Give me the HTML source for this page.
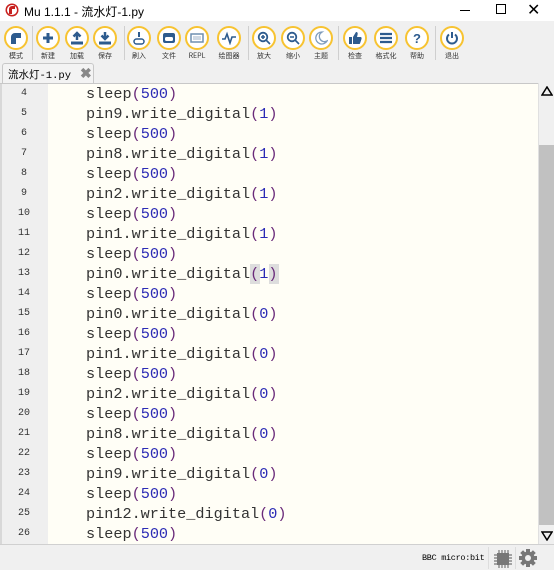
<!DOCTYPE html>
<html><head><meta charset="utf-8"><style>
*{margin:0;padding:0;box-sizing:border-box}
body{width:554px;height:570px;overflow:hidden;background:#f0f0f0;font-family:"Liberation Sans","Noto Sans CJK SC",sans-serif;position:relative}
.abs{position:absolute}
.title{left:0;top:0;width:554px;height:21px;background:#fff}
.btn{position:absolute;top:26px;width:24px;height:24px;border-radius:50%;border:2px solid #f7c331;background:#fff;display:flex;align-items:center;justify-content:center}
.lbl{position:absolute;top:51px;width:40px;text-align:center;font-size:7px;color:#333;font-family:"Noto Sans CJK SC",sans-serif}
.sep{position:absolute;top:26px;width:1px;height:34px;background:#cfcfcf}
.code{position:absolute;left:0;top:83px;width:538px;height:461px;background:#fffef6;overflow:hidden;border-top:1px solid #c8c8c8}
.gut{position:absolute;left:0;top:0;width:48px;height:100%;background:#efefef;border-left:2px solid #d8d8d8}
.ln{position:absolute;left:0;width:48px;text-align:center;font-family:"Liberation Mono",monospace;font-size:10px;color:#333;line-height:20px}
.cl{position:absolute;left:86px;font-family:"Liberation Mono",monospace;font-size:15.2px;line-height:20px;color:#333;white-space:pre}
.p{color:#6a2a7a}.n{color:#2b2bb5}
</style></head><body>
<div class="abs title">
 <svg class="abs" style="left:5px;top:3px" width="14" height="14" viewBox="0 0 14 14"><circle cx="7" cy="7" r="6.5" fill="#c8201e"/><circle cx="7" cy="7" r="5" fill="#fff"/><path d="M4 11V6a3 3 0 0 1 3-3h3v3H7v5z" fill="#c8201e"/></svg>
 <div class="abs" style="left:24px;top:3px;font-size:12px;color:#000">Mu 1.1.1 - 流水灯-1.py</div>
 <div class="abs" style="left:460px;top:10px;width:10px;height:1px;background:#000"></div>
 <div class="abs" style="left:496px;top:4px;width:10px;height:10px;border:1px solid #000"></div>
 <div class="abs" style="left:527px;top:0px;font-size:16px;color:#000">✕</div>
</div>

<div class="btn" style="left:4px"><svg width="14" height="14" viewBox="0 0 14 14"><path d="M2 13V6a4 4 0 0 1 4-4h6v5H7v6z" fill="#2d5b8e"/></svg></div>
<div class="lbl" style="left:-4px">模式</div>
<div class="sep" style="left:32px"></div>
<div class="btn" style="left:36px"><svg width="14" height="14"><path d="M7 2v10M2 7h10" stroke="#2d5b8e" stroke-width="3"/></svg></div>
<div class="lbl" style="left:28px">新建</div>
<div class="btn" style="left:65px"><svg width="14" height="14"><path d="M7 9V2M3.5 5.5L7 2l3.5 3.5" stroke="#2d5b8e" stroke-width="2.5" fill="none"/><rect x="1" y="10.5" width="12" height="3" fill="#2d5b8e"/></svg></div>
<div class="lbl" style="left:57px">加载</div>
<div class="btn" style="left:93px"><svg width="14" height="14"><path d="M7 1v7M3.5 4.5L7 8l3.5-3.5" stroke="#2d5b8e" stroke-width="2.5" fill="none"/><rect x="1" y="10.5" width="12" height="3" fill="#2d5b8e"/></svg></div>
<div class="lbl" style="left:85px">保存</div>
<div class="sep" style="left:124px"></div>
<div class="btn" style="left:127px"><svg width="14" height="14"><path d="M7 1v5" stroke="#2d5b8e" stroke-width="2"/><rect x="2" y="8" width="10" height="5" rx="2.5" fill="none" stroke="#2d5b8e" stroke-width="1.5"/></svg></div>
<div class="lbl" style="left:119px">刷入</div>
<div class="btn" style="left:157px"><svg width="14" height="14"><rect x="1" y="2" width="12" height="10" rx="2" fill="#2d5b8e"/><rect x="3" y="6" width="8" height="4" rx="1.5" fill="#fff"/></svg></div>
<div class="lbl" style="left:149px">文件</div>
<div class="btn" style="left:185px"><svg width="14" height="14"><rect x="1" y="3" width="12" height="8" fill="none" stroke="#6f8fb0" stroke-width="1.5"/><path d="M3 6h8M3 8h8" stroke="#9fb3c8"/></svg></div>
<div class="lbl" style="left:177px">REPL</div>
<div class="btn" style="left:217px"><svg width="14" height="14"><path d="M0 8h3l2-5 3 9 2-6h4" stroke="#2d5b8e" stroke-width="1.6" fill="none"/></svg></div>
<div class="lbl" style="left:209px">绘图器</div>
<div class="sep" style="left:248px"></div>
<div class="btn" style="left:252px"><svg width="14" height="14"><circle cx="6" cy="6" r="4.3" fill="none" stroke="#2d5b8e" stroke-width="1.8"/><path d="M9 9l4 4M4 6h4M6 4v4" stroke="#2d5b8e" stroke-width="1.6"/></svg></div>
<div class="lbl" style="left:244px">放大</div>
<div class="btn" style="left:281px"><svg width="14" height="14"><circle cx="6" cy="6" r="4.3" fill="none" stroke="#2d5b8e" stroke-width="1.8"/><path d="M9 9l4 4M4 6h4" stroke="#2d5b8e" stroke-width="1.6"/></svg></div>
<div class="lbl" style="left:273px">缩小</div>
<div class="btn" style="left:309px"><svg width="14" height="14"><path d="M8 1a6 6 0 1 0 5 9a5 5 0 0 1-5-9z" fill="none" stroke="#7f9cbc" stroke-width="1.3"/></svg></div>
<div class="lbl" style="left:301px">主题</div>
<div class="sep" style="left:338px"></div>
<div class="btn" style="left:343px"><svg width="14" height="14"><path d="M1 6h3v7H1zM5 6l3-5c1.5 0 2 1 1.5 3L9 6h3.5c1 0 1.3 1 1 2l-1.5 4.5c-.3.7-.8.5-1.5.5H5z" fill="#2d5b8e"/></svg></div>
<div class="lbl" style="left:335px">检查</div>
<div class="btn" style="left:374px"><svg width="14" height="14"><path d="M1 3h12M1 7h12M1 11h12" stroke="#2d5b8e" stroke-width="2.2"/></svg></div>
<div class="lbl" style="left:366px">格式化</div>
<div class="btn" style="left:405px"><span style="font-weight:bold;font-size:13px;color:#2d5b8e">?</span></div>
<div class="lbl" style="left:397px">帮助</div>
<div class="sep" style="left:435px"></div>
<div class="btn" style="left:440px"><svg width="14" height="14"><path d="M4 3.5a5 5 0 1 0 6 0" stroke="#2d5b8e" stroke-width="2" fill="none"/><path d="M7 1v6" stroke="#2d5b8e" stroke-width="2"/></svg></div>
<div class="lbl" style="left:432px">退出</div>

<div class="abs" style="left:2px;top:63px;width:92px;height:21px;background:#f3f3f3;border:1px solid #c8c8c8;border-bottom:none;border-radius:3px 3px 0 0">
 <span class="abs" style="left:5px;top:3px;font-size:10.5px;font-family:'Liberation Mono','Noto Sans CJK SC',monospace;color:#000">流水灯-1.py</span>
 <span class="abs" style="left:77px;top:1px;font-size:14px;color:#888;font-weight:bold">✖</span>
</div>

<div class="code">
 <div class="gut"></div>
 <div class="abs" style="left:250px;top:180px;width:10px;height:20px;background:#ddd"></div>
 <div class="abs" style="left:269px;top:180px;width:10px;height:20px;background:#ddd"></div>
 <div class="ln" style="top:0">4</div><div class="cl" style="top:0">sleep<span class="p">(</span><span class="n">500</span><span class="p">)</span></div>
 <div class="ln" style="top:20px">5</div><div class="cl" style="top:20px">pin9.write_digital<span class="p">(</span><span class="n">1</span><span class="p">)</span></div>
 <div class="ln" style="top:40px">6</div><div class="cl" style="top:40px">sleep<span class="p">(</span><span class="n">500</span><span class="p">)</span></div>
 <div class="ln" style="top:60px">7</div><div class="cl" style="top:60px">pin8.write_digital<span class="p">(</span><span class="n">1</span><span class="p">)</span></div>
 <div class="ln" style="top:80px">8</div><div class="cl" style="top:80px">sleep<span class="p">(</span><span class="n">500</span><span class="p">)</span></div>
 <div class="ln" style="top:100px">9</div><div class="cl" style="top:100px">pin2.write_digital<span class="p">(</span><span class="n">1</span><span class="p">)</span></div>
 <div class="ln" style="top:120px">10</div><div class="cl" style="top:120px">sleep<span class="p">(</span><span class="n">500</span><span class="p">)</span></div>
 <div class="ln" style="top:140px">11</div><div class="cl" style="top:140px">pin1.write_digital<span class="p">(</span><span class="n">1</span><span class="p">)</span></div>
 <div class="ln" style="top:160px">12</div><div class="cl" style="top:160px">sleep<span class="p">(</span><span class="n">500</span><span class="p">)</span></div>
 <div class="ln" style="top:180px">13</div><div class="cl" style="top:180px">pin0.write_digital<span class="p">(</span><span class="n">1</span><span class="p">)</span></div>
 <div class="ln" style="top:200px">14</div><div class="cl" style="top:200px">sleep<span class="p">(</span><span class="n">500</span><span class="p">)</span></div>
 <div class="ln" style="top:220px">15</div><div class="cl" style="top:220px">pin0.write_digital<span class="p">(</span><span class="n">0</span><span class="p">)</span></div>
 <div class="ln" style="top:240px">16</div><div class="cl" style="top:240px">sleep<span class="p">(</span><span class="n">500</span><span class="p">)</span></div>
 <div class="ln" style="top:260px">17</div><div class="cl" style="top:260px">pin1.write_digital<span class="p">(</span><span class="n">0</span><span class="p">)</span></div>
 <div class="ln" style="top:280px">18</div><div class="cl" style="top:280px">sleep<span class="p">(</span><span class="n">500</span><span class="p">)</span></div>
 <div class="ln" style="top:300px">19</div><div class="cl" style="top:300px">pin2.write_digital<span class="p">(</span><span class="n">0</span><span class="p">)</span></div>
 <div class="ln" style="top:320px">20</div><div class="cl" style="top:320px">sleep<span class="p">(</span><span class="n">500</span><span class="p">)</span></div>
 <div class="ln" style="top:340px">21</div><div class="cl" style="top:340px">pin8.write_digital<span class="p">(</span><span class="n">0</span><span class="p">)</span></div>
 <div class="ln" style="top:360px">22</div><div class="cl" style="top:360px">sleep<span class="p">(</span><span class="n">500</span><span class="p">)</span></div>
 <div class="ln" style="top:380px">23</div><div class="cl" style="top:380px">pin9.write_digital<span class="p">(</span><span class="n">0</span><span class="p">)</span></div>
 <div class="ln" style="top:400px">24</div><div class="cl" style="top:400px">sleep<span class="p">(</span><span class="n">500</span><span class="p">)</span></div>
 <div class="ln" style="top:420px">25</div><div class="cl" style="top:420px">pin12.write_digital<span class="p">(</span><span class="n">0</span><span class="p">)</span></div>
 <div class="ln" style="top:440px">26</div><div class="cl" style="top:440px">sleep<span class="p">(</span><span class="n">500</span><span class="p">)</span></div>
</div>

<div class="abs" style="left:538px;top:83px;width:16px;height:461px;background:#f0f0f0;border-left:1px solid #e0e0e0">
 <svg class="abs" style="left:2px;top:3px" width="12" height="10"><path d="M1 9L6 1l5 8z" fill="none" stroke="#000" stroke-width="1.5"/></svg>
 <div class="abs" style="left:0;top:62px;width:16px;height:380px;background:#c1c1c1"></div>
 <svg class="abs" style="left:2px;top:448px" width="12" height="10"><path d="M1 1l5 8 5-8z" fill="none" stroke="#000" stroke-width="1.5"/></svg>
</div>

<div class="abs" style="left:0;top:544px;width:554px;height:26px;background:#f0f0f0;border-top:1px solid #d0d0d0">
 <div class="abs" style="left:422px;top:8px;font-family:'Liberation Mono',monospace;font-size:8.5px;letter-spacing:-0.3px;color:#000">BBC micro:bit</div>
 <div class="abs" style="left:488px;top:2px;width:1px;height:22px;background:#ddd"></div>
 <svg class="abs" style="left:493px;top:4px" width="20" height="20" viewBox="0 0 20 20"><rect x="4" y="4" width="12" height="12" fill="#777"/><path d="M6 1v18M9 1v18M12 1v18M15 1v18M1 6h18M1 9h18M1 12h18M1 15h18" stroke="#777" stroke-width="1.2"/></svg>
 <div class="abs" style="left:515px;top:2px;width:1px;height:22px;background:#ddd"></div>
 <svg class="abs" style="left:518px;top:3px" width="20" height="20" viewBox="0 0 20 20"><g fill="#777"><circle cx="10" cy="10" r="6.5"/><rect x="8" y="1" width="4" height="18"/><rect x="1" y="8" width="18" height="4"/><rect x="8" y="1" width="4" height="18" transform="rotate(45 10 10)"/><rect x="8" y="1" width="4" height="18" transform="rotate(-45 10 10)"/></g><circle cx="10" cy="10" r="3" fill="#f0f0f0"/></svg>
</div>
</body></html>
